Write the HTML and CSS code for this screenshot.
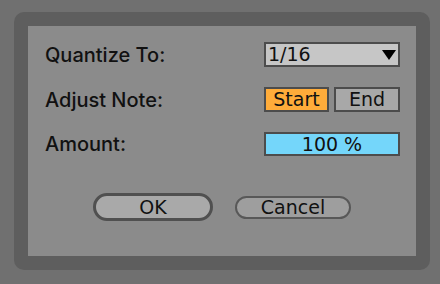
FILE: index.html
```html
<!DOCTYPE html>
<html>
<head>
<meta charset="utf-8">
<link rel="stylesheet" href="styles.css">
</head>
<body>
<div class="frame">
  <div class="panel">
    <div class="grid">
      <div class="label">Quantize To:</div>
      <div class="dropdown">
        <span>1/16</span>
        <svg class="arrow" width="14" height="10" viewBox="0 0 14 10"><polygon points="0,0 14,0 7,10" fill="#000"/></svg>
      </div>
      <div class="label">Adjust Note:</div>
      <div class="toggles">
        <div class="toggle on">Start</div>
        <div class="toggle">End</div>
      </div>
      <div class="label">Amount:</div>
      <div class="amount">100 %</div>
    </div>
    <div class="buttons">
      <div class="btn ok">OK</div>
      <div class="btn cancel">Cancel</div>
    </div>
  </div>
</div>
</body>
</html>
```
FILE: styles.css
```css
html, body {
  margin: 0;
  padding: 0;
}
body {
  background: #707070;
  width: 440px;
  height: 284px;
  overflow: hidden;
}
.frame {
  margin: 12px 0 0 14px;
  width: 416px;
  height: 258px;
  box-sizing: border-box;
  padding: 14px;
  background: #5e5e5e;
  border-radius: 10px;
}
.panel {
  width: 388px;
  height: 230px;
  background: #8b8b8b;
  box-sizing: border-box;
  padding: 16px 16px 0 17px;
}
.grid {
  display: grid;
  grid-template-columns: 1fr 136px;
  grid-auto-rows: 25px;
  row-gap: 19.5px;
  align-items: center;
}
.label {
  font-family: "Inter", "DejaVu Sans", sans-serif;
  font-size: 20px;
  font-weight: 500;
  color: #111;
  line-height: 25px;
  padding-top: 2px;
}
.dropdown, .toggle, .amount, .btn {
  font-family: "DejaVu Sans", sans-serif;
  font-size: 19px;
  color: #111;
  box-sizing: border-box;
}
.dropdown {
  height: 25px;
  border: 2px solid #4c4c4c;
  background: #c6c6c6;
  display: flex;
  align-items: center;
  justify-content: space-between;
  padding: 0 2px 0 2px;
  line-height: 21px;
}
.toggles {
  display: flex;
  gap: 5px;
  height: 25px;
}
.toggle {
  flex: 0 0 65px;
  height: 25px;
  border: 2px solid #4c4c4c;
  background: #a8a8a8;
  display: flex;
  align-items: center;
  justify-content: center;
  line-height: 21px;
}
.toggle + .toggle {
  flex: 0 0 66px;
}
.toggle.on {
  background: #ffac3a;
}
.amount {
  height: 24px;
  border: 2px solid #4c4c4c;
  background: #74d6fa;
  display: flex;
  align-items: center;
  justify-content: center;
  line-height: 20px;
}
.buttons {
  display: flex;
  justify-content: center;
  align-items: center;
  gap: 22px;
  margin-top: 37px;
  margin-left: -17px;
  margin-right: -16px;
}
.btn {
  display: flex;
  align-items: center;
  justify-content: center;
  border-radius: 14px;
}
.ok {
  width: 120px;
  height: 28px;
  border: 3px solid #505050;
  background: #a9a9a9;
}
.cancel {
  width: 116px;
  height: 23px;
  border: 2px solid #585858;
  background: #9e9e9e;
}
```
